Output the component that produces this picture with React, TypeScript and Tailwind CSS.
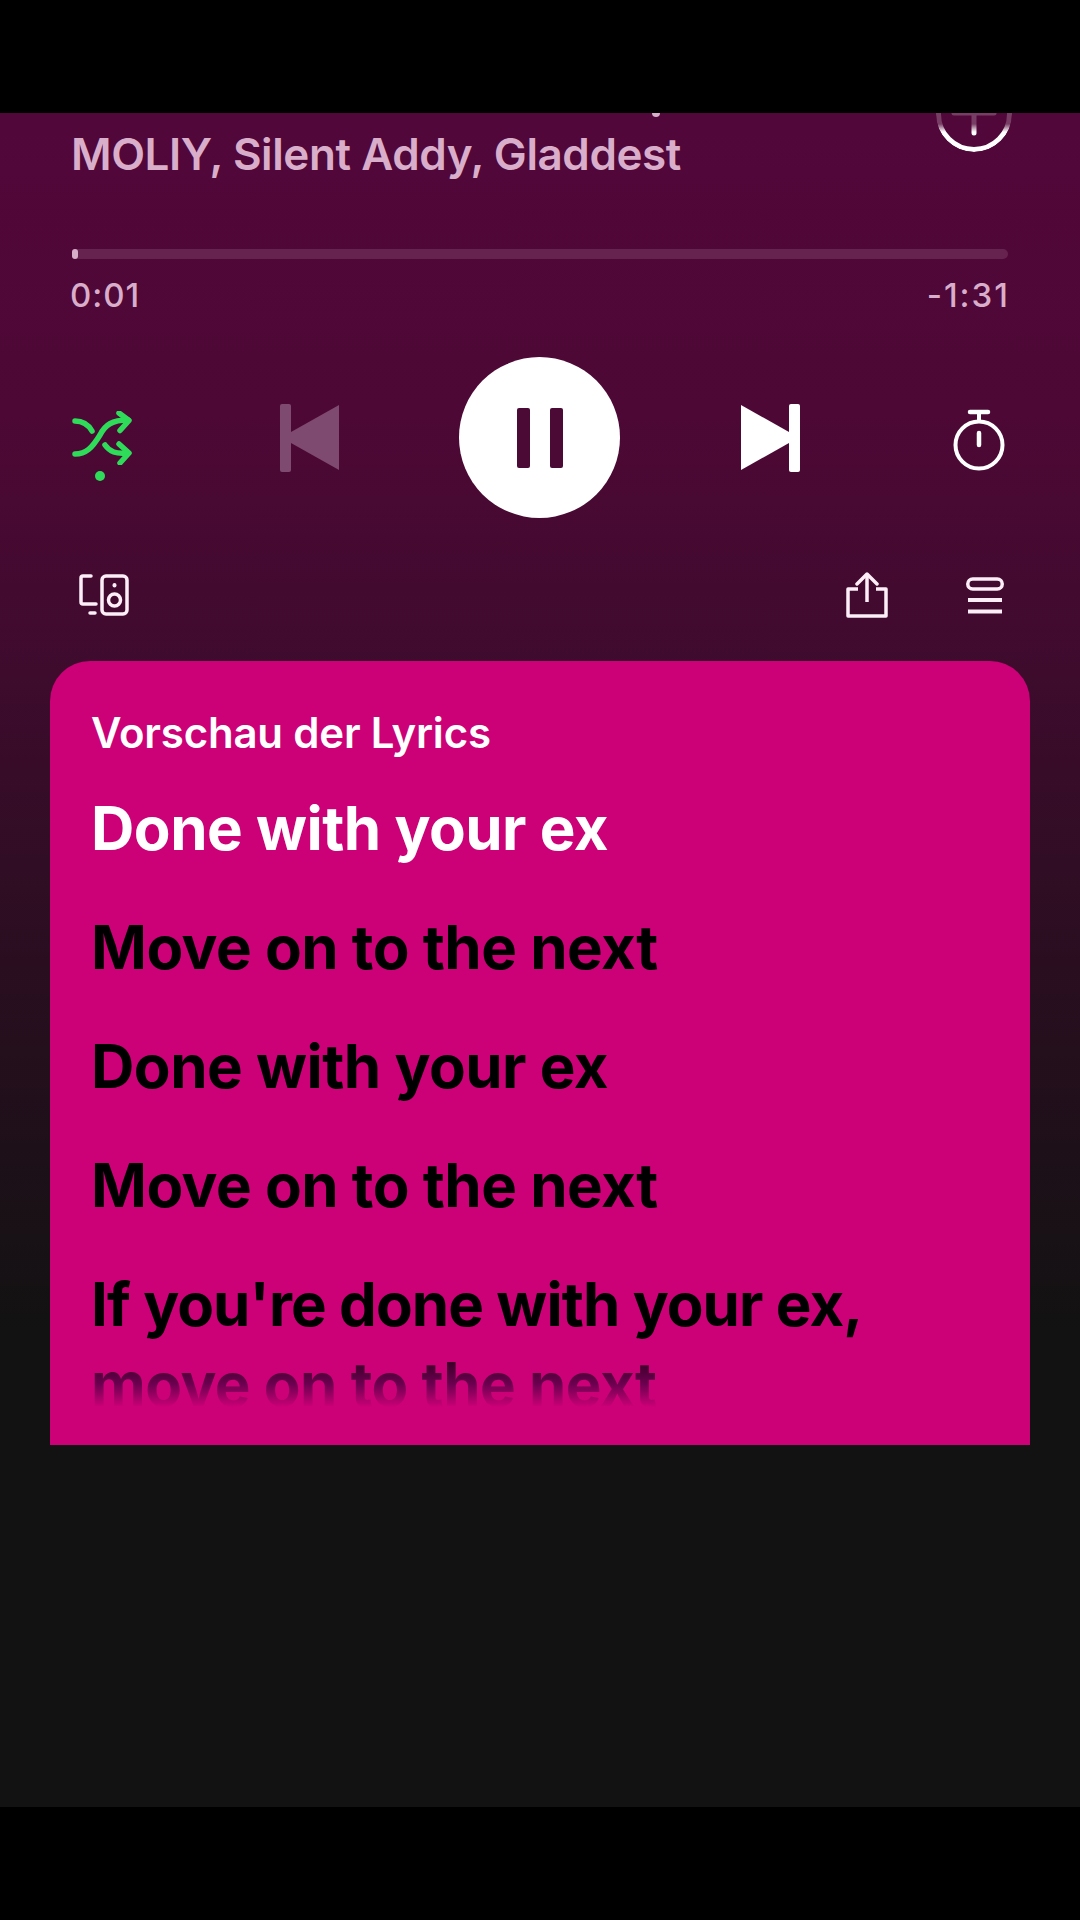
import React from 'react';

const fontStack = { fontFamily: 'Inter, "Liberation Sans", sans-serif' };

function ShuffleIcon() {
  return (
    <svg width="60" height="54" viewBox="0 0 60 54" fill="none" stroke="#2fdc5a" strokeWidth="5.500" strokeLinecap="round" strokeLinejoin="round">
      <path d="M3 10c8 0 13 3 17 10" />
      <path d="M3 43c11 0 17-6 25-19 5-10 12-15 28-15" />
      <path d="M33 34c5 7 11 9 22 8" />
      <path d="M47 2l10 7.500-9 10" />
      <path d="M47 33l10 9-9 10" />
    </svg>
  );
}

function PrevIcon() {
  return (
    <svg width="60" height="68" viewBox="0 0 60 68" fill="#7f4a70">
      <rect x="0" y="0" width="11" height="68" rx="2" />
      <path d="M11 28L59 1v65L11 39z" />
    </svg>
  );
}

function NextIcon() {
  return (
    <svg width="60" height="68" viewBox="0 0 60 68" fill="#ffffff">
      <rect x="49" y="0" width="11" height="68" rx="2" />
      <path d="M49 28L1 1v65l48-27z" />
    </svg>
  );
}

function TimerIcon() {
  return (
    <svg width="52" height="62" viewBox="0 0 52 62" fill="none" stroke="#ffffff" strokeWidth="4" strokeLinecap="round">
      <circle cx="26" cy="36" r="23.500" />
      <path d="M17 3h18" strokeWidth="4.500" />
      <path d="M26 4v7" />
      <path d="M26 24v12" strokeWidth="4.500" />
    </svg>
  );
}

function DevicesIcon() {
  return (
    <svg width="50" height="42" viewBox="0 0 50 42" fill="none" stroke="#fdeef8" strokeWidth="3.500" strokeLinecap="round" strokeLinejoin="round">
      <path d="M12 2H4a2 2 0 0 0-2 2v24a2 2 0 0 0 2 2h13" />
      <path d="M11 39h5" />
      <rect x="23" y="2" width="25" height="38" rx="4" />
      <circle cx="35.500" cy="26" r="6" />
      <path d="M35.500 11v.5" strokeWidth="4" />
    </svg>
  );
}

function ShareIcon() {
  return (
    <svg width="42" height="46" viewBox="0 0 42 46" fill="none" stroke="#fdeef8" strokeWidth="3.500" strokeLinejoin="round">
      <path d="M12 17H2v27h38V17H30" />
      <path d="M21 30V3" />
      <path d="M11 12L21 2l10 10" strokeLinecap="round" />
    </svg>
  );
}

function QueueIcon() {
  return (
    <svg width="38" height="37" viewBox="0 0 38 37" fill="none" stroke="#fdeef8" strokeWidth="4">
      <rect x="1.750" y="2" width="34.500" height="10" rx="5" strokeWidth="3.500" />
      <path d="M2 23h34" />
      <path d="M2 34.500h34" />
    </svg>
  );
}

function SaveIcon() {
  return (
    <div className="mr-[68px] mt-[-39px] flex h-[78px] w-[76px] items-center justify-center rounded-full border-[5px] border-white [mask-image:linear-gradient(180deg,rgba(0,0,0,0.22)_50px,#000_58px)]">
      <svg width="46" height="46" viewBox="0 0 46 46" fill="none" stroke="#ffffff" strokeWidth="5" strokeLinecap="round">
        <path d="M3 23h40" />
        <path d="M23 3v40" />
      </svg>
    </div>
  );
}

const lyrics = ['Move on to the next', 'Done with your ex', 'Move on to the next'];

export default function App() {
  return (
    <div className="flex h-[1920px] w-[1080px] flex-col overflow-hidden bg-black" style={fontStack}>
      <div className="h-[113px] shrink-0 bg-black" />
      <div className="h-[1694px] shrink-0 overflow-hidden bg-[linear-gradient(180deg,#52073a_0%,#4d0835_18%,#3e0b2d_33%,#2a0e20_50%,#121212_72%)]">
        {/* track info, cut off at the top like the screen recording */}
        <div className="relative flex items-start justify-between pl-[71px]">
          <div className="absolute left-[652px] top-0 h-[4px] w-[8px] rounded-b-full bg-[#d9aecb]" />
          <p className="mt-[16px] text-[44px] font-semibold leading-[50px] tracking-[-0.4px] text-[#d9aecb]">
            MOLIY, Silent Addy, Gladdest
          </p>
          <SaveIcon />
        </div>

        {/* progress */}
        <div className="mx-[72px] mt-[70px] flex h-[10px] items-center rounded-full bg-[#67234f]">
          <div className="h-[10px] w-[6px] rounded-full bg-[#d9aecb]" />
        </div>
        <div className="ml-[70px] mr-[70px] mt-[16px] flex justify-between text-[33px] font-medium leading-[40px] tracking-[2px] text-[#d9aecb]">
          <span className="tracking-[1px]">0:01</span>
          <span>-1:31</span>
        </div>

        {/* transport controls */}
        <div className="mt-[42px] flex h-[161px] items-center pl-[72px]">
          <div className="relative mt-[-2px] h-[52px] w-[60px]">
            <ShuffleIcon />
            <div className="absolute left-[23px] top-[60px] h-[10px] w-[10px] rounded-full bg-[#2fdc5a]" />
          </div>
          <div className="ml-[148px]">
            <PrevIcon />
          </div>
          <div className="ml-[119px] flex h-[161px] w-[161px] items-center justify-center gap-[20px] rounded-full bg-white">
            <div className="h-[60px] w-[13px] rounded-[2px] bg-[#4b0a35]" />
            <div className="h-[60px] w-[13px] rounded-[2px] bg-[#4b0a35]" />
          </div>
          <div className="ml-[120px]">
            <NextIcon />
          </div>
          <div className="ml-[153px] mt-[4px]">
            <TimerIcon />
          </div>
        </div>

        {/* secondary actions */}
        <div className="mt-[53px] flex h-[48px] items-center pl-[79px]">
          <DevicesIcon />
          <div className="ml-[717px]">
            <ShareIcon />
          </div>
          <div className="ml-[78px]">
            <QueueIcon />
          </div>
        </div>

        {/* lyrics card */}
        <div className="mx-[50px] mt-[42px] h-[784px] overflow-hidden rounded-t-[40px] bg-[#cc0077] px-[41px] pt-[48px] font-bold">
          <p className="text-[42px] font-semibold leading-[48px] tracking-[-0.2px] text-white">Vorschau der Lyrics</p>
          <div className="mt-[31px] flex flex-col gap-[39px] text-[60px] leading-[80px] tracking-[-0.5px] text-black">
            <p className="text-white">Done with your ex</p>
            {lyrics.map((line, index) => (
              <p key={line + index}>{line}</p>
            ))}
            <p>
              <span className="tracking-[-0.93px]">If you're done with your ex,</span>
              <br />
              <span className="bg-[linear-gradient(180deg,#3b0028_20%,#6c0050_50%,#cc0077_82%)] bg-clip-text text-transparent">
                move on to the next
              </span>
            </p>
          </div>
        </div>
      </div>
      <div className="grow bg-black" />
    </div>
  );
}
